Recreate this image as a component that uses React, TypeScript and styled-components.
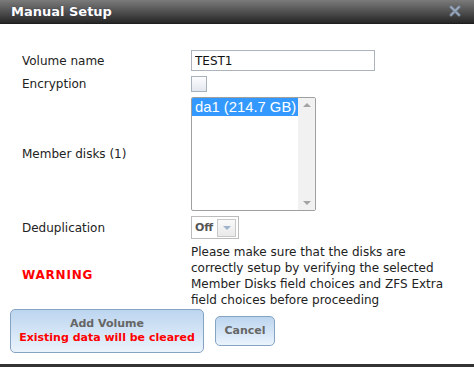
import React from 'react'
import styled, { createGlobalStyle } from 'styled-components'

const GlobalStyle = createGlobalStyle`
  html, body {
    margin: 0;
    padding: 0;
    background: #ffffff;
  }
  * {
    box-sizing: border-box;
  }
`

const StyledDialog = styled('div')`
  width: 474px;
  height: 367px;
  display: flex;
  flex-direction: column;
  background: #ffffff;
  border-bottom: 3px solid #333333;
  font-family: "DejaVu Sans", Verdana, sans-serif;
  font-size: 12px;
  color: #222222;
`

const StyledTitleBar = styled('div')`
  height: 24px;
  flex: none;
  display: flex;
  align-items: center;
  justify-content: space-between;
  padding: 0 13px 1px 11px;
  background: linear-gradient(to bottom, #7b7b7b 0%, #555555 45%, #262626 100%);
  border-bottom: 1px solid #1e1e1e;
`

const StyledTitle = styled('h2')`
  margin: 0;
  font-size: 13px;
  font-weight: bold;
  color: #ffffff;
  text-shadow: 0 0 1px #202040;
`

const StyledClose = styled('span')`
  display: flex;
  width: 12px;
  height: 12px;
  opacity: 0.85;
`

const StyledBody = styled('div')`
  flex: 1;
  padding-top: 26px;
  display: flex;
  flex-direction: column;
`

const StyledForm = styled('div')`
  display: grid;
  grid-template-columns: 169px 1fr;
  row-gap: 5px;
  align-items: center;
  padding-left: 22px;
`

const StyledLabel = styled('div')<{ warning?: boolean }>`
  color: ${p => p.warning ? '#ff0000' : '#222222'};
  font-weight: ${p => p.warning ? 'bold' : 'normal'};
  letter-spacing: ${p => p.warning ? '0.8px' : 'normal'};
  margin-top: ${p => p.warning ? '-3px' : '0'};
`

const StyledInput = styled('input')`
  width: 184px;
  height: 21px;
  padding: 0 3px;
  border: 1px solid #adb3bc;
  font-family: "DejaVu Sans", Verdana, sans-serif;
  font-size: 12px;
  color: #111111;
  outline: none;
`

const StyledCheckbox = styled('span')`
  display: block;
  width: 16px;
  height: 16px;
  border: 1px solid #a9b1bd;
  background: linear-gradient(to bottom, #fdfdfe, #e3e8ef);
`

const StyledListBox = styled('div')`
  width: 125px;
  height: 114px;
  display: flex;
  border: 1px solid #a0a0a0;
  border-radius: 2px;
  background: #ffffff;
  overflow: hidden;
`

const StyledOptions = styled('div')`
  flex: 1;
  font-family: "Liberation Sans", Arial, sans-serif;
  font-size: 14.8px;
`

const StyledOption = styled('div')<{ selected?: boolean }>`
  height: 18px;
  line-height: 18px;
  padding-left: 3px;
  white-space: nowrap;
  overflow: hidden;
  background: ${p => p.selected ? '#3399ff' : 'transparent'};
  color: ${p => p.selected ? '#ffffff' : '#000000'};
`

const StyledScrollbar = styled('div')`
  width: 17px;
  flex: none;
  display: flex;
  flex-direction: column;
  justify-content: space-between;
  align-items: center;
  padding: 5px 0 5px 0;
  background: #f1f1f1;
`

const StyledArrow = styled('span')<{ down?: boolean; color?: string }>`
  width: 0;
  height: 0;
  border-left: 4px solid transparent;
  border-right: 4px solid transparent;
  ${p => p.down
    ? `border-top: 4px solid ${p.color || '#a3a3a3'};`
    : `border-bottom: 4px solid ${p.color || '#a3a3a3'};`}
`

const StyledSelect = styled('div')`
  width: 48px;
  height: 23px;
  display: flex;
  align-items: center;
  justify-content: space-between;
  padding: 0 2px 0 3px;
  border: 1px solid #bcbcbc;
  background: #ffffff;
`

const StyledSelectValue = styled('span')`
  font-size: 11px;
  font-weight: bold;
  color: #555555;
`

const StyledSelectButton = styled('span')`
  width: 19px;
  height: 18px;
  display: flex;
  align-items: center;
  justify-content: center;
  border: 1px solid #c8c8c8;
  background: linear-gradient(to bottom, #fafafa, #e9e9e9);
`

const StyledNote = styled('p')`
  margin: 0;
  width: 264px;
  line-height: 16px;
  color: #222222;
`

const StyledButtonRow = styled('div')`
  display: flex;
  align-items: center;
  gap: 11px;
  padding-left: 10px;
  margin-top: 1px;
`

const StyledButton = styled('button')<{ big?: boolean }>`
  width: ${p => p.big ? '194px' : '60px'};
  height: ${p => p.big ? '44px' : '30px'};
  display: flex;
  flex-direction: column;
  align-items: center;
  justify-content: center;
  padding: 0;
  border: 1px solid #86a3c2;
  border-radius: 5px;
  background: linear-gradient(to bottom, #bcd5ef 0%, #d3e4f6 50%, #eaf3fc 100%);
  font-family: "DejaVu Sans", Verdana, sans-serif;
  font-size: 11px;
  font-weight: bold;
  line-height: 14px;
  color: #666666;
`

const StyledDanger = styled('span')`
  color: #ff0000;
`

const CloseIcon = () => (
  <svg width="12" height="12" viewBox="0 0 12 12">
    <path d="M2 2 L10 10 M10 2 L2 10" stroke="#7f93ad" strokeWidth="3" strokeLinecap="round" />
    <path d="M2 2 L10 10 M10 2 L2 10" stroke="#aebdd0" strokeWidth="1.2" strokeLinecap="round" />
  </svg>
)

const App = () => {
  return (
    <>
      <GlobalStyle />
      <StyledDialog>
        <StyledTitleBar>
          <StyledTitle>Manual Setup</StyledTitle>
          <StyledClose><CloseIcon /></StyledClose>
        </StyledTitleBar>
        <StyledBody>
          <StyledForm>
            <StyledLabel>Volume name</StyledLabel>
            <div><StyledInput defaultValue="TEST1" /></div>

            <StyledLabel>Encryption</StyledLabel>
            <div><StyledCheckbox /></div>

            <StyledLabel>Member disks (1)</StyledLabel>
            <StyledListBox>
              <StyledOptions>
                <StyledOption selected>da1 (214.7 GB)</StyledOption>
              </StyledOptions>
              <StyledScrollbar>
                <StyledArrow />
                <StyledArrow down />
              </StyledScrollbar>
            </StyledListBox>

            <StyledLabel>Deduplication</StyledLabel>
            <StyledSelect>
              <StyledSelectValue>Off</StyledSelectValue>
              <StyledSelectButton><StyledArrow down color="#9fb3cc" /></StyledSelectButton>
            </StyledSelect>

            <StyledLabel warning>WARNING</StyledLabel>
            <StyledNote>
              Please make sure that the disks are correctly setup by verifying the selected Member Disks field choices and ZFS Extra field choices before proceeding
            </StyledNote>
          </StyledForm>
          <StyledButtonRow>
            <StyledButton big>
              <span>Add Volume</span>
              <StyledDanger>Existing data will be cleared</StyledDanger>
            </StyledButton>
            <StyledButton>Cancel</StyledButton>
          </StyledButtonRow>
        </StyledBody>
      </StyledDialog>
    </>
  )
}

export default App
